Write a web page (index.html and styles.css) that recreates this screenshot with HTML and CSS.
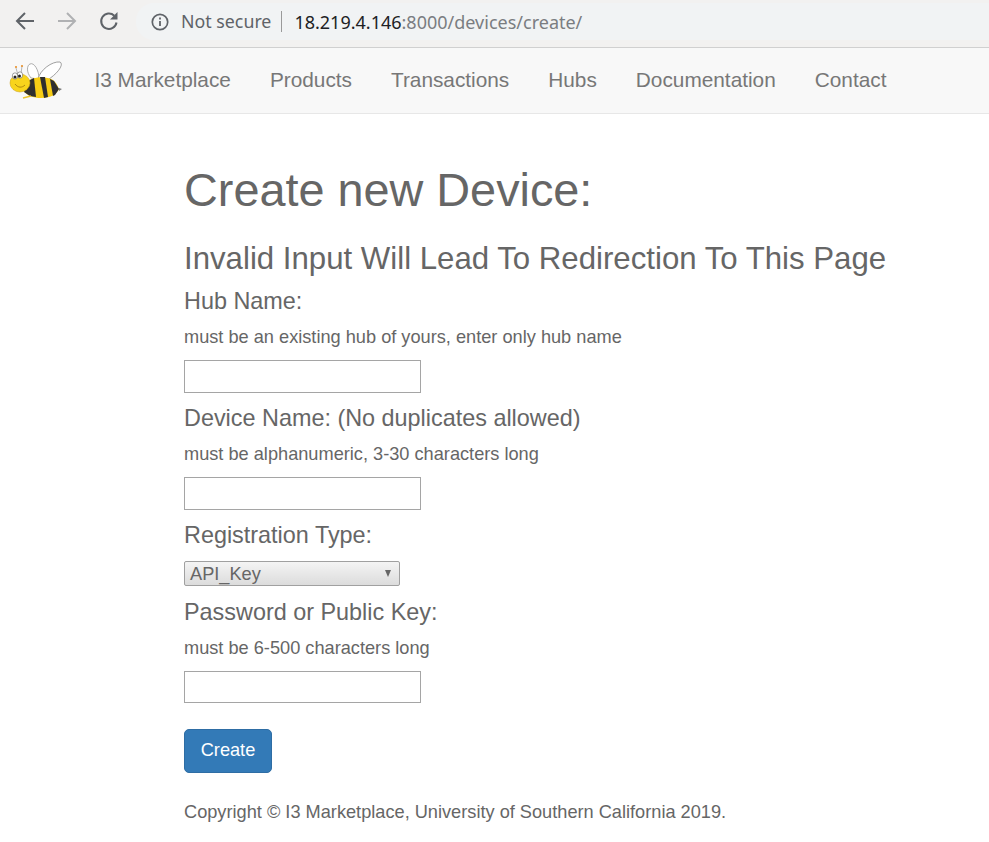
FILE: index.html
```html
<!DOCTYPE html>
<html lang="en">
<head>
  <meta charset="UTF-8" />
  <title>Create new Device</title>
  <link rel="stylesheet" href="styles.css">
</head>
<body>
  <div class="chrome">
    <svg class="chrome-icon" viewBox="0 0 20 20"><path d="M19 10H2M10 2L2 10L10 18" fill="none" stroke="#5f6368" stroke-width="2"/></svg>
    <svg class="chrome-icon" viewBox="0 0 20 20"><path d="M1 10H18M10 2L18 10L10 18" fill="none" stroke="#b0b1b3" stroke-width="2"/></svg>
    <svg class="chrome-icon" viewBox="0 0 20 20"><path d="M17.500 11.500A7.700 7.700 0 1 1 15.300 4.700" fill="none" stroke="#5f6368" stroke-width="2"/><path d="M18.500 1V8.500H11Z" fill="#5f6368"/></svg>
    <div class="omnibox">
      <svg class="info-icon" viewBox="0 0 18 18"><circle cx="9" cy="9" r="7.700" fill="none" stroke="#5f6368" stroke-width="1.700"/><path d="M9 8v5M9 4.500v1.900" stroke="#5f6368" stroke-width="1.800"/></svg>
      <span class="not-secure">Not secure</span>
      <span class="url"><b>18.219.4.146</b>:8000/devices/create/</span>
    </div>
  </div>

  <nav class="navbar">
    <svg class="bee" viewBox="0 0 54 42">
      <path d="M22 18C17 12 18 5 21 4C25 2 30 10 30 19Z" fill="#fff" stroke="#999" stroke-width="0.800"/>
      <path d="M29 19C31 10 43 1 51 2C55 4 50 13 37 21Z" fill="#fff" stroke="#888" stroke-width="0.800"/>
      <path d="M7 8L9 15M13 6L12 14" stroke="#888" stroke-width="0.600"/>
      <circle cx="7" cy="7" r="1.100" fill="#e8912c"/>
      <circle cx="13" cy="6" r="1.100" fill="#e8912c"/>
      <path d="M16 24C20 17 36 15 44 20C48 23 49 27 50 29C48 34 42 38 32 38C24 38 18 36 14 30Z" fill="#f7cd16"/>
      <path d="M19 21L25 18L27 37L21 36L15 32Z" fill="#2f2f2f"/>
      <path d="M31 17L36 17L39 37L35 38Z" fill="#2f2f2f"/>
      <path d="M41 19L45 21L50 29L46 35L44 36Z" fill="#2f2f2f"/>
      <path d="M50 28L53 29L50 31Z" fill="#777"/>
      <ellipse cx="11" cy="23" rx="10" ry="9" fill="#f8d41c" stroke="#c99c0e" stroke-width="0.500"/>
      <ellipse cx="6" cy="16" rx="2.700" ry="3.200" fill="#fff" stroke="#444" stroke-width="0.500"/>
      <ellipse cx="11" cy="15" rx="2.700" ry="3.200" fill="#fff" stroke="#444" stroke-width="0.500"/>
      <circle cx="6" cy="17" r="1.500" fill="#222"/>
      <circle cx="10.500" cy="16" r="1.500" fill="#222"/>
      <path d="M6 24C9 28 13 28 16 25" fill="none" stroke="#8f6a08" stroke-width="0.700"/>
      <path d="M14 38L22 36" stroke="#e8c22a" stroke-width="1.500"/>
    </svg>
    <a class="nav-link" href="#">I3 Marketplace</a>
    <a class="nav-link" href="#">Products</a>
    <a class="nav-link" href="#">Transactions</a>
    <a class="nav-link" href="#">Hubs</a>
    <a class="nav-link" href="#">Documentation</a>
    <a class="nav-link" href="#">Contact</a>
  </nav>

  <div class="container">
    <h1>Create new Device:</h1>
    <h3>Invalid Input Will Lead To Redirection To This Page</h3>
    <form>
      <div class="field-label">Hub Name:</div>
      <p class="hint">must be an existing hub of yours, enter only hub name</p>
      <input class="text-input" type="text">

      <div class="field-label">Device Name: (No duplicates allowed)</div>
      <p class="hint">must be alphanumeric, 3-30 characters long</p>
      <input class="text-input" type="text">

      <div class="field-label">Registration Type:</div>
      <div class="select-box">API_Key<span class="caret"></span></div>

      <div class="field-label">Password or Public Key:</div>
      <p class="hint">must be 6-500 characters long</p>
      <input class="text-input text-input-last" type="text">

      <button class="btn" type="button">Create</button>
    </form>
    <p class="copyright">Copyright © I3 Marketplace, University of Southern California 2019.</p>
  </div>
</body>
</html>
```

FILE: styles.css
```css
body {
  margin: 0;
  font-family: "Liberation Sans", Arial, sans-serif;
  font-size: 18.2px;
  line-height: 26px;
  color: #666;
  background-color: #fff;
}

/* browser toolbar */
.chrome {
  box-sizing: border-box;
  height: 48px;
  display: flex;
  align-items: center;
  padding: 0 0 4px 15px;
  background-color: #f2f1f0;
  border-bottom: 1px solid #d0d0d0;
}
.chrome-icon {
  width: 20px;
  height: 20px;
  margin: 0 22px 1px 0;
}
.omnibox {
  display: flex;
  align-items: center;
  height: 37px;
  flex: 1;
  margin-left: -5px;
  padding-left: 15px;
  border-radius: 18px 0 0 18px;
  background-color: #f1f3f4;
  font-family: "Noto Sans", sans-serif;
  font-size: 17.800px;
}
.info-icon {
  width: 18px;
  height: 18px;
  margin-right: 12px;
}
.not-secure {
  color: #5f6368;
  padding-right: 10px;
  border-right: 1px solid #9a9a9a;
  line-height: 21px;
}
.url {
  margin-left: 12px;
  color: #7a7d81;
  font-size: 18px;
}
.url b {
  color: #202124;
  font-weight: normal;
}

/* navbar */
.navbar {
  box-sizing: border-box;
  height: 66px;
  display: flex;
  align-items: center;
  padding: 0 0 2px 9px;
  background-color: #f8f8f8;
  border-bottom: 1px solid #e7e7e7;
}
.bee {
  width: 54px;
  height: 42px;
  margin: 2px 12px 0 0;
}
.nav-link {
  margin: 0 19.500px;
  color: #777;
  font-size: 20.800px;
  text-decoration: none;
}

/* page content */
.container {
  padding: 50px 0 0 184px;
}
h1 {
  margin: 0 0 26px;
  font-size: 46.800px;
  line-height: 52px;
  font-weight: 500;
}
h3 {
  margin: 0 0 12px;
  font-size: 31.200px;
  line-height: 34px;
  font-weight: 500;
}
.field-label {
  font-size: 23.400px;
  line-height: 26px;
}
.hint {
  margin: 10px 0;
}
.text-input {
  display: block;
  box-sizing: border-box;
  width: 237px;
  height: 33px;
  margin-bottom: 12px;
  padding: 0 4px;
  background-color: #fff;
  border: 1px solid #a5a5a5;
}
.text-input-last {
  height: 32px;
  margin-bottom: 0;
}
.select-box {
  position: relative;
  box-sizing: border-box;
  width: 216px;
  height: 25px;
  margin: 13px 0;
  padding-left: 5px;
  font-size: 18.200px;
  line-height: 24px;
  background: linear-gradient(#f4f4f4, #dcdcdc);
  border: 1px solid #a0a0a0;
  border-radius: 2px;
}
.caret {
  position: absolute;
  top: 8px;
  right: 8px;
  border-left: 3.500px solid transparent;
  border-right: 3.500px solid transparent;
  border-top: 7px solid #666;
}
.btn {
  display: block;
  width: 88px;
  height: 44px;
  margin-top: 26px;
  padding: 0 0 1px;
  color: #fff;
  font-family: inherit;
  font-size: 18.200px;
  background-color: #337ab7;
  border: 1px solid #2e6da4;
  border-radius: 5px;
}
.copyright {
  margin: 26px 0 0;
}
```
